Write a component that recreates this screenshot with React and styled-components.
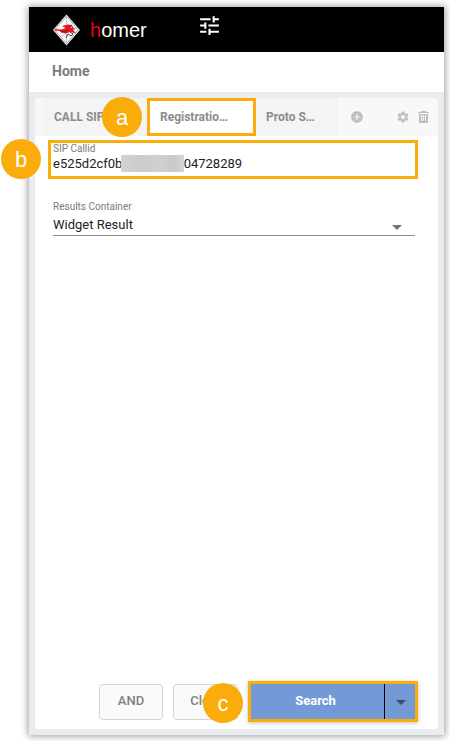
import React, { useState } from "react";
import styled, { createGlobalStyle, css } from "styled-components";
import { MdAddCircle, MdSettings, MdTune } from "react-icons/md";

const ACCENT = "#f9ac0a";

const GlobalStyle = createGlobalStyle`
  *, *::before, *::after { box-sizing: border-box; }
  body { margin: 0; background: #fff; font-family: Roboto, "Liberation Sans", sans-serif; }
  button, input, select { font: inherit; color: inherit; margin: 0; padding: 0; border: 0; background: none; }
  button { cursor: pointer; }
`;

const Page = styled.div`
  display: flex;
  min-height: 100vh;
  padding: 7px 6px 6px 29px;
`;

const Window = styled.div`
  flex: 1;
  min-width: 0;
  display: flex;
  flex-direction: column;
  background: #e9edf0;
  box-shadow: 0 0 7px 1px rgba(0, 0, 0, 0.4);
`;

const TopBar = styled.header`
  display: flex;
  align-items: center;
  height: 45px;
  padding-left: 23px;
  background: #000;
  color: #fff;
`;

const Brand = styled.a`
  display: flex;
  align-items: center;
  gap: 9px;
  color: #fff;
  font: 20px/24px "Liberation Sans", sans-serif;
  text-decoration: none;
`;

const BrandInitial = styled.span`
  color: #e30613;
`;

const TuneButton = styled.button`
  display: flex;
  margin: 0 0 9px 50px;
`;

const Breadcrumb = styled.nav`
  display: flex;
  align-items: center;
  height: 40px;
  padding: 0 23px 2px;
  background: #fff;
  color: #7d7d7d;
  font-size: 14px;
  font-weight: 700;
`;

const Body = styled.main`
  flex: 1;
  display: flex;
  padding: 6px;
`;

const Card = styled.section`
  flex: 1;
  min-width: 0;
  display: flex;
  flex-direction: column;
  background: #fff;
  border-radius: 4px;
`;

const TabBar = styled.div`
  display: flex;
  height: 38px;
  padding-left: 8px;
  background: #f8f8f8;
  border-radius: 4px 4px 0 0;
`;

const TabSlot = styled.div`
  position: relative;
  display: flex;
  width: ${(p) => (p.$short ? "83px" : "106px")};
`;

const Tab = styled.button`
  flex: 1;
  padding: 0 11px;
  background: ${(p) => (p.$active ? "#fff" : "#f4f4f4")};
  color: #8c8c8c;
  font-size: 12px;
  font-weight: 700;
  text-align: left;
  white-space: nowrap;
`;

const frame = css`
  border: 3px solid ${ACCENT};
`;

const TabFrame = styled.span`
  ${frame}
  position: absolute;
  z-index: 1;
  inset: 0 -1px 0 -2px;
  pointer-events: none;
`;

const TabTools = styled.div`
  flex: 1;
  display: flex;
  align-items: center;
  gap: 8px;
  padding: 0 9px 0 12px;
  color: #bfbfbf;
`;

const ToolButton = styled.button`
  display: flex;
  margin-right: ${(p) => (p.$push ? "auto" : "0")};
`;

const Callout = styled.span`
  position: absolute;
  z-index: 2;
  left: ${(p) => p.$x}px;
  top: ${(p) => p.$y}px;
  width: 40px;
  height: 40px;
  border-radius: 50%;
  background: ${ACCENT};
  color: #fff;
  font: 22px/42px "Liberation Sans", sans-serif;
  text-align: center;
`;

const Form = styled.form`
  flex: 1;
  display: flex;
  flex-direction: column;
  padding: 4px 20px 7px 13px;
`;

const Field = styled.div`
  position: relative;
  display: flex;
  flex-direction: column;
  padding: ${(p) => (p.$framed ? "0 2px 4px" : "0")};
  margin: ${(p) => (p.$framed ? "0 0 22px" : "0 3px 0 5px")};
  ${(p) => p.$framed && frame}
`;

const Label = styled.label`
  color: #7b7b7b;
  font-size: 10px;
  line-height: 12px;
`;

const TextInput = styled.input`
  width: 100%;
  height: 17px;
  color: #222;
  font-size: 13px;
  outline: 0;
`;

const Redaction = styled.span`
  position: absolute;
  left: 70px;
  top: 12px;
  width: 63px;
  height: 17px;
  background: linear-gradient(90deg, #d3d3d3, #cbcbcb 30%, #d0d0d0 60%, #c9c9c9 85%, #d6d6d6);
`;

const SelectWrap = styled.div`
  display: flex;
  align-items: center;
  border-bottom: 1px solid #8b8b8b;
`;

const Select = styled.select`
  flex: 1;
  height: 22px;
  appearance: none;
  color: #222;
  font-size: 13px;
  outline: 0;
`;

const Caret = styled.span`
  border: 5px solid transparent;
  border-top-color: ${(p) => p.$color};
  border-bottom: 0;
  pointer-events: none;
`;

const SelectCaret = styled(Caret)`
  margin: 6px 13px 0 0;
`;

const Actions = styled.div`
  position: relative;
  display: flex;
  align-items: center;
  justify-content: flex-end;
  gap: 10px;
  margin-top: auto;
`;

const PlainButton = styled.button`
  width: ${(p) => (p.$wide ? "65px" : "64px")};
  height: 36px;
  padding-bottom: 2px;
  background: #fafafa;
  border: 1px solid #d4d4d4;
  border-radius: 4px;
  color: #7f7f7f;
  font-size: 13px;
  font-weight: 500;
`;

const SearchGroup = styled.div`
  display: flex;
  width: 170px;
  height: 41px;
  border: 3px solid ${ACCENT};
  background: #739ad6;
  box-shadow: 0 1px 4px rgba(0, 0, 0, 0.25);
`;

const SearchButton = styled.button`
  flex: 1;
  padding: 0 4px 2px 0;
  color: #fff;
  font-size: 13px;
  font-weight: 700;
`;

const SearchMenu = styled.button`
  display: flex;
  align-items: center;
  justify-content: center;
  width: 31px;
  padding: 2px 0 0 2px;
  border-left: 1px solid #000;
`;

function HomerLogo() {
  return (
    <svg width="29" height="32" viewBox="0 0 29 32" aria-hidden="true">
      <path d="M14.5 .5 28 16 14.5 31.5 1 16Z" fill="#e8e8e8" />
      <path d="M14.5 2.5 26.2 16 14.5 29.5 2.8 16Z" fill="#fafafa" stroke="#666" strokeWidth=".7" strokeDasharray="1.5 .7" />
      <path d="M14.5 3v26M20 10 10 23" stroke="#b5b5b5" strokeWidth=".7" />
      <path d="m19 12 2 1-1 2M18 18l3 2-2 2-3-2-2 4M20 17l2 2" fill="none" stroke="#333" strokeWidth=".9" />
      <path d="m2.5 15 7 .5 4-1.5-3.5-2 6-1.5 4 .5-1 3 5 .5-3 1.5 3 3-6-1-4 1.5-5-1-1-1.5-5-.5Z" fill="#e5161d" />
      <path d="m8 17 5 .5 4-1.5" fill="none" stroke="#8f1115" strokeWidth=".7" />
    </svg>
  );
}

function TrashIcon() {
  return (
    <svg width="11" height="12" viewBox="0 0 11 12" fill="currentColor" aria-hidden="true">
      <path d="M0 1h3V0h5v1h3v1H0Z" />
      <path fillRule="evenodd" d="M1 3h9v9H1ZM3 4v6h1V4ZM5 4v6h1V4ZM7 4v6h1V4Z" />
    </svg>
  );
}

const MASKED_ID = "e525d2cf0b" + "\u00a0".repeat(19) + "04728289";

export default function App() {
  const [callId, setCallId] = useState(MASKED_ID);
  return (
    <>
      <GlobalStyle />
      <Page>
        <Window>
          <TopBar>
            <Brand href="#home">
              <HomerLogo />
              <span><BrandInitial>h</BrandInitial>omer</span>
            </Brand>
            <TuneButton aria-label="Preferences"><MdTune size={25} /></TuneButton>
          </TopBar>
          <Breadcrumb>Home</Breadcrumb>
          <Body>
            <Card>
              <TabBar>
                <TabSlot>
                  <Tab>CALL SIP</Tab>
                  <Callout $x={59} $y={-1}>a</Callout>
                </TabSlot>
                <TabSlot>
                  <Tab $active>Registratio…</Tab>
                  <TabFrame />
                </TabSlot>
                <TabSlot $short>
                  <Tab>Proto S…</Tab>
                </TabSlot>
                <TabTools>
                  <ToolButton $push aria-label="Add tab"><MdAddCircle size={14} /></ToolButton>
                  <ToolButton aria-label="Settings"><MdSettings size={14} /></ToolButton>
                  <ToolButton aria-label="Delete"><TrashIcon /></ToolButton>
                </TabTools>
              </TabBar>
              <Form onSubmit={(e) => e.preventDefault()}>
                <Field $framed>
                  <Label htmlFor="callid">SIP Callid</Label>
                  <TextInput id="callid" value={callId} onChange={(e) => setCallId(e.target.value)} />
                  <Redaction />
                  <Callout $x={-50} $y={-4}>b</Callout>
                </Field>
                <Field>
                  <Label htmlFor="container">Results Container</Label>
                  <SelectWrap>
                    <Select id="container">
                      <option>Widget Result</option>
                    </Select>
                    <SelectCaret $color="#757575" />
                  </SelectWrap>
                </Field>
                <Actions>
                  <PlainButton type="button">AND</PlainButton>
                  <PlainButton type="button" $wide>Clear</PlainButton>
                  <SearchGroup>
                    <SearchButton type="submit">Search</SearchButton>
                    <SearchMenu type="button" aria-label="More search options">
                      <Caret $color="#3f4d66" />
                    </SearchMenu>
                  </SearchGroup>
                  <Callout $x={155} $y={2}>c</Callout>
                </Actions>
              </Form>
            </Card>
          </Body>
        </Window>
      </Page>
    </>
  );
}
